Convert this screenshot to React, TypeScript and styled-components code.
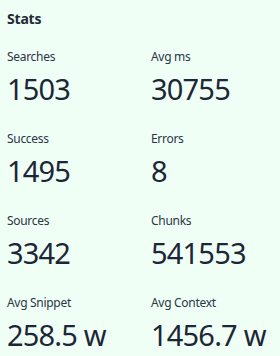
import styled, { createGlobalStyle } from 'styled-components';

const GlobalStyle = createGlobalStyle`
  html, body {
    margin: 0;
    padding: 0;
    background: #f0fff6;
  }
`;

const stats = [
  { label: 'Searches', value: '1503' },
  { label: 'Avg ms', value: '30755' },
  { label: 'Success', value: '1495' },
  { label: 'Errors', value: '8' },
  { label: 'Sources', value: '3342' },
  { label: 'Chunks', value: '541553' },
  { label: 'Avg Snippet', value: '258.5 w' },
  { label: 'Avg Context', value: '1456.7 w' },
];

const App = () => {
  return (
    <Container>
      <GlobalStyle />
      <Title>Stats</Title>
      <Grid>
        {stats.map((item) => (
          <Metric key={item.label}>
            <Label>{item.label}</Label>
            <Value>{item.value}</Value>
          </Metric>
        ))}
      </Grid>
    </Container>
  );
};

const Container = styled.div`
  width: 280px;
  height: 356px;
  box-sizing: border-box;
  padding: 9px 7px 0;
  background: #f0fff6;
  color: #1f2a37;
  font-family: 'Noto Sans', 'Open Sans', sans-serif;
  overflow: hidden;
`;

const Title = styled.div`
  font-size: 14px;
  font-weight: 700;
  line-height: 20px;
  letter-spacing: -0.2px;
`;

const Grid = styled.div`
  display: grid;
  grid-template-columns: 144px 1fr;
  row-gap: 24px;
  margin-top: 20px;
`;

const Metric = styled.div`
  display: flex;
  flex-direction: column;
  gap: 6px;
`;

const Label = styled.div`
  font-size: 12px;
  line-height: 16px;
  color: #2b3545;
  letter-spacing: -0.3px;
`;

const Value = styled.div`
  font-size: 29px;
  line-height: 36px;
  letter-spacing: -0.8px;
  color: #1c2636;
`;

export default App;
